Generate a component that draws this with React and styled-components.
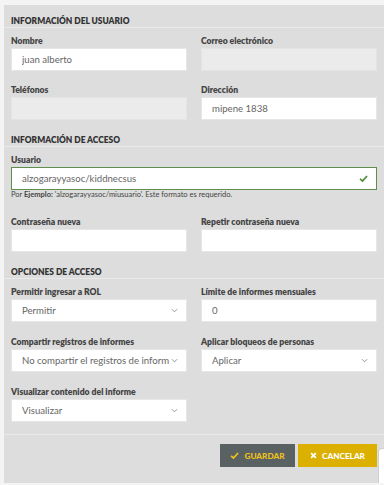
import React from 'react';
import styled, { createGlobalStyle } from 'styled-components';

const GlobalStyle = createGlobalStyle`
  html, body {
    margin: 0;
    padding: 0;
    background: #f4f4f4;
    font-family: Lato, "Open Sans", sans-serif;
  }
`;

const Panel = styled.div`
  position: relative;
  margin: 5px 0 0 4px;
  background: #dddddd;
  padding: 0 7px 16px 7px;
`;

const Heading = styled.div`
  margin: 0 -7px 8px -7px;
  padding: ${props => (props.first ? 10 : 0)}px 7px 0 7px;
  font-size: 8.4px;
  line-height: 12px;
  font-weight: 800;
  color: #333;
  text-transform: uppercase;
  border-bottom: 1px solid #e9e9e9;
`;

const Row = styled.div`
  display: grid;
  grid-template-columns: ${props => (props.single ? '1fr' : '1fr 1fr')};
  column-gap: 14px;
  margin-bottom: ${props => props.gap ?? 14}px;
`;

const Field = styled.div`
  display: flex;
  flex-direction: column;
  min-width: 0;
`;

const Label = styled.label`
  font-size: 8.6px;
  line-height: 11px;
  font-weight: 800;
  color: #444;
  margin-bottom: 1px;
`;

const Box = styled.div`
  box-sizing: border-box;
  height: 23px;
  display: flex;
  align-items: center;
  padding: 0 8px 0 10px;
  background: ${props => (props.disabled ? '#ebebeb' : '#fff')};
  border: 1px solid ${props => (props.valid ? '#5e8f4f' : props.disabled ? '#e4e4e4' : '#e6e6e6')};
  font-size: 9.6px;
  color: #666;
`;

const Value = styled.span`
  flex: 1;
  overflow: hidden;
  white-space: nowrap;
`;

const Help = styled.div`
  font-size: 7.5px;
  line-height: 10px;
  color: #444;
  margin-bottom: 17px;

  b {
    font-weight: 700;
  }
`;

const Footer = styled.div`
  display: flex;
  justify-content: flex-end;
  gap: 3px;
  margin: 12px -7px 0 -7px;
  padding: 9px 7px 0 7px;
  border-top: 1px solid #e9e9e9;
`;

const Button = styled.button`
  height: 23px;
  width: ${props => props.width}px;
  display: flex;
  align-items: center;
  justify-content: center;
  gap: 5px;
  border: none;
  border-radius: 0;
  background: ${props => (props.primary ? '#5a6162' : '#dbb000')};
  color: ${props => (props.primary ? '#eec21c' : '#fff')};
  font-family: Lato, "Open Sans", sans-serif;
  font-size: 8.2px;
  font-weight: 900;
  text-transform: uppercase;
  padding: 0;
`;

// floating widget peeking in at the bottom right edge
const Widget = styled.div`
  position: absolute;
  right: 0;
  top: 443px;
  box-sizing: border-box;
  width: 6px;
  height: 37px;
  background: #fff;
  border: 1px solid #cfcfcf;
  border-right: none;
  border-bottom: none;
  border-radius: 4px 0 0 0;
`;

const Check = ({ color = '#4d8a3c', size = 9 }) => (
  <svg width={size} height={size} viewBox="0 0 10 10">
    <path d="M1.2 5.3 L3.9 7.9 L8.9 2.2" fill="none" stroke={color} strokeWidth="1.9" />
  </svg>
);

const Cross = () => (
  <svg width="7" height="7" viewBox="0 0 8 8">
    <path d="M1.3 1.3 L6.7 6.7 M6.7 1.3 L1.3 6.7" stroke="#fff" strokeWidth="2" />
  </svg>
);

const Chevron = () => (
  <svg width="7" height="5" viewBox="0 0 8 5">
    <path d="M1 1 L4 4 L7 1" fill="none" stroke="#888" strokeWidth="1" />
  </svg>
);

function Input({ label, value, disabled, valid }) {
  return (
    <Field>
      <Label>{label}</Label>
      <Box disabled={disabled} valid={valid}>
        <Value>{value}</Value>
        {valid && <Check />}
      </Box>
    </Field>
  );
}

function Select({ label, value }) {
  return (
    <Field>
      <Label>{label}</Label>
      <Box>
        <Value>{value}</Value>
        <Chevron />
      </Box>
    </Field>
  );
}

export default function App() {
  return (
    <>
      <GlobalStyle />
      <Panel>
        <Heading first>Información del usuario</Heading>
        <Row>
          <Input label="Nombre" value="juan alberto" />
          <Input label="Correo electrónico" disabled />
        </Row>
        <Row>
          <Input label="Teléfonos" disabled />
          <Input label="Dirección" value="mipene 1838" />
        </Row>

        <Heading>Información de acceso</Heading>
        <Row single gap={0}>
          <Input label="Usuario" value="alzogarayyasoc/kiddnecsus" valid />
        </Row>
        <Help>
          Por <b>Ejemplo:</b> 'alzogarayyasoc/miusuario'. Este formato es requerido.
        </Help>
        <Row>
          <Input label="Contraseña nueva" />
          <Input label="Repetir contraseña nueva" />
        </Row>

        <Heading>Opciones de acceso</Heading>
        <Row gap={15}>
          <Select label="Permitir ingresar a ROL" value="Permitir" />
          <Input label="Límite de informes mensuales" value="0" />
        </Row>
        <Row gap={15}>
          <Select label="Compartir registros de informes" value="No compartir el registros de inform" />
          <Select label="Aplicar bloqueos de personas" value="Aplicar" />
        </Row>
        <Row gap={0}>
          <Select label="Visualizar contenido del informe" value="Visualizar" />
          <div />
        </Row>

        <Footer>
          <Button primary width={75}>
            <Check color="#eec21c" size={9} />
            Guardar
          </Button>
          <Button width={79}>
            <Cross />
            Cancelar
          </Button>
        </Footer>
        <Widget />
      </Panel>
    </>
  );
}
